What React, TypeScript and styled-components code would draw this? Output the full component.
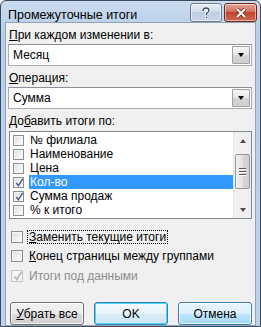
import React from 'react';
import styled, { createGlobalStyle } from 'styled-components';

const GlobalStyle = createGlobalStyle`
  html, body {
    margin: 0;
    padding: 0;
    background: #ffffff;
  }
  body {
    font-family: "Liberation Sans", Arial, sans-serif;
    font-size: 12px;
    color: #000;
  }
`;

const Window = styled.div`
  width: 261px;
  height: 327px;
  box-sizing: border-box;
  border: 1px solid #3d4a5a;
  border-radius: 6px 6px 0 0;
  background: linear-gradient(#c9dbef, #b9cfe8 30px, #bcd1ea);
  display: flex;
  flex-direction: column;
  overflow: hidden;
`;

const TitleBar = styled.div`
  height: 29px;
  display: flex;
  align-items: flex-start;
  padding: 0 3px 0 7px;
`;

const Title = styled.div`
  flex: 1;
  font-size: 12.5px;
  padding-top: 7px;
  color: #000;
`;

const CaptionButton = styled.div<{ $close?: boolean }>`
  width: ${p => (p.$close ? 31 : 30)}px;
  height: 17px;
  margin-top: 2px;
  margin-left: 2px;
  border: 1px solid ${p => (p.$close ? '#6d2a22' : '#6f7d8e')};
  border-radius: 3px;
  box-sizing: content-box;
  display: flex;
  align-items: center;
  justify-content: center;
  background: ${p =>
    p.$close
      ? 'linear-gradient(#e8a494, #d3705e 45%, #c3442e 50%, #cf6a50)'
      : 'linear-gradient(#e8eef6, #d2dceb 45%, #bfcde0 50%, #c9d6e8)'};
  box-shadow: inset 0 0 0 1px rgba(255, 255, 255, 0.5);
`;

const Client = styled.div`
  flex: 1;
  margin: 0 4px 4px 4px;
  border: 1px solid #8fa3bb;
  background: #f0f0f0;
  padding: 4px 3px 0 2px;
  display: flex;
  flex-direction: column;
`;

const Label = styled.div<{ $top: number }>`
  margin-top: ${p => p.$top}px;
  height: 14px;
  line-height: 14px;
  padding-left: 1px;
`;

const U = styled.span`
  text-decoration: underline;
`;

const Combo = styled.div`
  margin-top: 2px;
  height: 20px;
  border: 1px solid #abadb3;
  border-top-color: #8d9096;
  background: #fff;
  display: flex;
  align-items: stretch;
`;

const ComboText = styled.div`
  flex: 1;
  padding-left: 4px;
  line-height: 20px;
`;

const DropButton = styled.div`
  width: 16px;
  margin: 1px;
  border: 1px solid #a0a0a0;
  border-radius: 1px;
  background: linear-gradient(#f6f6f6, #e7e7e7 50%, #d6d6d6 51%, #cecece);
  display: flex;
  align-items: center;
  justify-content: center;
`;

const Arrow = styled.div<{ $up?: boolean; $color?: string }>`
  width: 0;
  height: 0;
  border-left: 3.5px solid transparent;
  border-right: 3.5px solid transparent;
  ${p =>
    p.$up
      ? `border-bottom: 4px solid ${p.$color || '#000'};`
      : `border-top: 4px solid ${p.$color || '#000'};`}
`;

const ListBox = styled.div`
  margin-top: 3px;
  margin-left: 1px;
  height: 86px;
  border: 1px solid #828790;
  background: #fff;
  display: flex;
`;

const ListItems = styled.div`
  flex: 1;
  padding-top: 1px;
  padding-left: 3px;
`;

const ListRow = styled.div`
  height: 14px;
  display: flex;
  align-items: center;
`;

const RowText = styled.div<{ $selected?: boolean }>`
  flex: 1;
  height: 14px;
  line-height: 14px;
  margin-left: 5px;
  padding-left: 1px;
  background: ${p => (p.$selected ? '#3399ff' : 'transparent')};
  color: ${p => (p.$selected ? '#fff' : '#000')};
`;

const ScrollBar = styled.div`
  width: 17px;
  background: #f0f0f0;
  border-left: 1px solid #e4e4e4;
  display: flex;
  flex-direction: column;
  align-items: center;
`;

const ScrollArrowBox = styled.div`
  height: 17px;
  width: 17px;
  display: flex;
  align-items: center;
  justify-content: center;
`;

const Thumb = styled.div`
  margin-top: 5px;
  width: 13px;
  height: 33px;
  border: 1px solid #979797;
  border-radius: 2px;
  background: linear-gradient(90deg, #f1f1f1, #e3e3e3 50%, #d4d4d4 51%, #cfcfcf);
  display: flex;
  flex-direction: column;
  align-items: center;
  justify-content: center;
  gap: 2px;
`;

const Grip = styled.div`
  width: 7px;
  height: 1px;
  background: #555;
  box-shadow: 0 1px 0 #fff;
`;

const ScrollSpacer = styled.div`
  flex: 1;
`;

const Box = styled.div<{ $size: number; $disabled?: boolean }>`
  width: ${p => p.$size}px;
  height: ${p => p.$size}px;
  box-sizing: border-box;
  border: 1px solid ${p => (p.$disabled ? '#c3c3c3' : '#8f8f8f')};
  background: ${p =>
    p.$disabled
      ? '#f4f4f4'
      : 'linear-gradient(135deg, #dcdcdc, #f2f2f2 60%, #ffffff)'};
  box-shadow: inset 0 0 0 1px ${p => (p.$disabled ? '#f4f4f4' : '#f5f5f5')};
  position: relative;
  flex: none;
`;

const CheckSvg = styled.svg`
  position: absolute;
  left: 0;
  top: -1px;
`;

function CheckBox({ checked, size = 12, disabled }: { checked?: boolean; size?: number; disabled?: boolean }) {
  return (
    <Box $size={size} $disabled={disabled}>
      {checked && (
        <CheckSvg width={size} height={size} viewBox="0 0 12 12">
          <path
            d="M2.5 6.5 L4.8 9.5 L9.5 2"
            fill="none"
            stroke={disabled ? '#b5b5b5' : '#4a5f97'}
            strokeWidth="1.6"
          />
        </CheckSvg>
      )}
    </Box>
  );
}

const OptionRow = styled.div<{ $top: number }>`
  margin-top: ${p => p.$top}px;
  height: 14px;
  display: flex;
  align-items: center;
  padding-left: 3px;
`;

const OptionText = styled.div<{ $focus?: boolean; $disabled?: boolean }>`
  margin-left: 4px;
  padding: 0 1px;
  line-height: 12px;
  border: 1px ${p => (p.$focus ? 'dotted #000' : 'solid transparent')};
  color: ${p => (p.$disabled ? '#8d8d8d' : '#000')};
`;

const ButtonRow = styled.div`
  margin-top: 19px;
  display: flex;
  gap: 10px;
  padding-left: 2px;
`;

const Button = styled.div<{ $variant?: 'default' | 'hover' }>`
  width: 72px;
  height: 21px;
  border: 1px solid ${p => (p.$variant ? '#3c7fb1' : '#707070')};
  border-radius: 3px;
  display: flex;
  align-items: center;
  justify-content: center;
  background: ${p =>
    p.$variant === 'hover'
      ? 'linear-gradient(#eaf6fd, #d9f0fc 50%, #bee6fd 51%, #a7d9f5)'
      : p.$variant === 'default'
      ? 'linear-gradient(#f2f9fd, #e8f4fb 50%, #d9edf8 51%, #cde6f4)'
      : 'linear-gradient(#f2f2f2, #ebebeb 50%, #dddddd 51%, #cfcfcf)'};
  box-shadow: inset 0 0 0 1px ${p => (p.$variant === 'default' ? '#48d8fb' : 'rgba(255,255,255,0.7)')};
`;

const fields = [
  { name: '№ филиала', checked: false },
  { name: 'Наименование', checked: false },
  { name: 'Цена', checked: false },
  { name: 'Кол-во', checked: true, selected: true },
  { name: 'Сумма продаж', checked: true },
  { name: '% к итого', checked: false },
];

export default function App() {
  return (
    <>
      <GlobalStyle />
      <Window>
        <TitleBar>
          <Title>Промежуточные итоги</Title>
          <CaptionButton>
            <svg width="10" height="12" viewBox="0 0 10 12">
              <path
                d="M2 4 Q2 1 5 1 Q8 1 8 3.6 Q8 5.2 5.6 6.4 L5.6 8"
                fill="none"
                stroke="#fff"
                strokeWidth="3"
              />
              <path
                d="M2 4 Q2 1 5 1 Q8 1 8 3.6 Q8 5.2 5.6 6.4 L5.6 8"
                fill="none"
                stroke="#3b4f6b"
                strokeWidth="1.4"
              />
              <rect x="4.6" y="9.3" width="2" height="2" fill="#3b4f6b" stroke="#fff" strokeWidth="0.6" />
            </svg>
          </CaptionButton>
          <CaptionButton $close>
            <svg width="12" height="10" viewBox="0 0 12 10">
              <path d="M2 1 L10 9 M10 1 L2 9" stroke="#6b2015" strokeWidth="3.6" />
              <path d="M2 1 L10 9 M10 1 L2 9" stroke="#fff" strokeWidth="2.2" />
            </svg>
          </CaptionButton>
        </TitleBar>
        <Client>
          <Label $top={1}>
            <U>П</U>ри каждом изменении в:
          </Label>
          <Combo>
            <ComboText>Месяц</ComboText>
            <DropButton>
              <Arrow />
            </DropButton>
          </Combo>
          <Label $top={5}>
            <U>О</U>перация:
          </Label>
          <Combo>
            <ComboText>Сумма</ComboText>
            <DropButton>
              <Arrow />
            </DropButton>
          </Combo>
          <Label $top={5}>
            До<U>б</U>авить итоги по:
          </Label>
          <ListBox>
            <ListItems>
              {fields.map(f => (
                <ListRow key={f.name}>
                  <CheckBox checked={f.checked} size={11} />
                  <RowText $selected={f.selected}>{f.name}</RowText>
                </ListRow>
              ))}
            </ListItems>
            <ScrollBar>
              <ScrollArrowBox>
                <Arrow $up $color="#4d4d4d" />
              </ScrollArrowBox>
              <Thumb>
                <Grip />
                <Grip />
                <Grip />
              </Thumb>
              <ScrollSpacer />
              <ScrollArrowBox>
                <Arrow $color="#4d4d4d" />
              </ScrollArrowBox>
            </ScrollBar>
          </ListBox>
          <OptionRow $top={11}>
            <CheckBox />
            <OptionText $focus>
              <U>З</U>аменить текущие итоги
            </OptionText>
          </OptionRow>
          <OptionRow $top={5}>
            <CheckBox />
            <OptionText>
              <U>К</U>онец страницы между группами
            </OptionText>
          </OptionRow>
          <OptionRow $top={6}>
            <CheckBox checked disabled />
            <OptionText $disabled>Итоги под данными</OptionText>
          </OptionRow>
          <ButtonRow>
            <Button>
              <span>
                <U>У</U>брать все
              </span>
            </Button>
            <Button $variant="default">OK</Button>
            <Button $variant="hover">Отмена</Button>
          </ButtonRow>
        </Client>
      </Window>
    </>
  );
}
